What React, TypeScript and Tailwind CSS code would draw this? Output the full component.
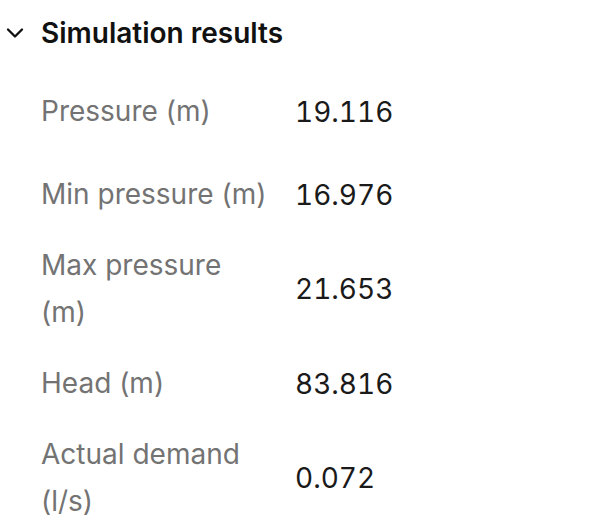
import { ChevronDown } from "lucide-react";

const rows: { label: string; value: string }[] = [
  { label: "Pressure (m)", value: "19.116" },
  { label: "Min pressure (m)", value: "16.976" },
  { label: "Max pressure (m)", value: "21.653" },
  { label: "Head (m)", value: "83.816" },
  { label: "Actual demand (l/s)", value: "0.072" },
];

export default function App() {
  return (
    <div className="w-[590px] h-[524px] overflow-hidden bg-white font-['Inter',sans-serif] text-[28px]">
      {/* Section header */}
      <div className="flex items-center h-[66px] pl-[1px] gap-[12px]">
        <ChevronDown size={28} strokeWidth={2} className="text-[#111]" />
        <h2 className="font-semibold text-[#111] leading-none">Simulation results</h2>
      </div>

      {/* Results */}
      <dl className="mt-[4px] pl-[41px]">
        {rows.map((r) => (
          <div key={r.label} className="grid grid-cols-[226px_1fr] gap-x-[28px] items-center min-h-[83px]">
            <dt className="text-[#737373] leading-[47px] py-[6px]">{r.label}</dt>
            <dd className="text-[#1a1a1a] leading-[42px] tabular-nums">{r.value}</dd>
          </div>
        ))}
      </dl>
    </div>
  );
}
